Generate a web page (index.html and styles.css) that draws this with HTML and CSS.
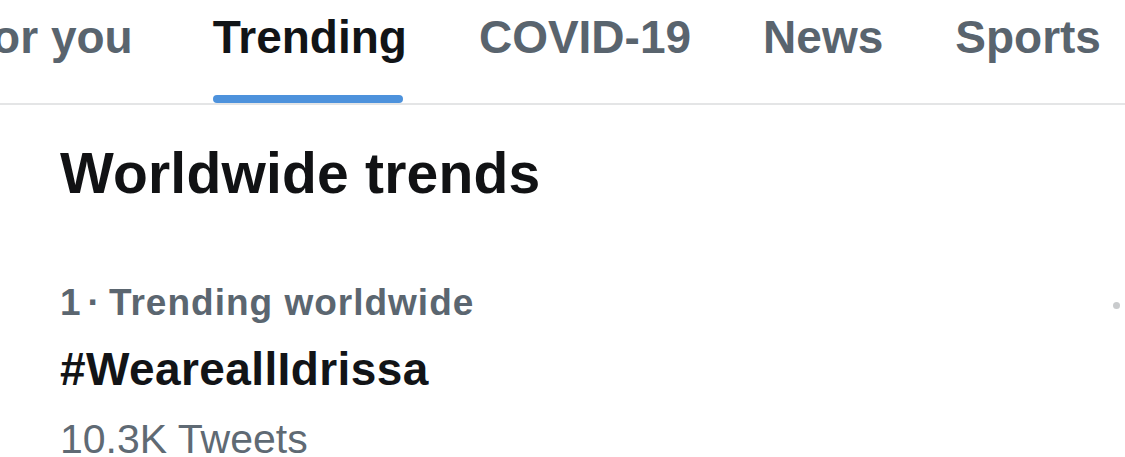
FILE: index.html
```html
<!DOCTYPE html>
<html lang="en">
<head>
<meta charset="utf-8">
<title>Explore - Trending</title>
<link rel="stylesheet" href="styles.css">
</head>
<body>
  <nav class="tabs">
    <div class="tab tab-first"><span class="tab-label">For you</span></div>
    <div class="tab tab-active"><span class="tab-label">Trending</span><span class="tab-indicator"></span></div>
    <div class="tab"><span class="tab-label">COVID-19</span></div>
    <div class="tab"><span class="tab-label">News</span></div>
    <div class="tab"><span class="tab-label">Sports</span></div>
  </nav>
  <main class="content">
    <h1 class="section-title">Worldwide trends</h1>
    <div class="trend">
      <div class="trend-info">
        <div class="trend-meta"><span class="trend-rank">1</span><span class="trend-sep">·</span>Trending worldwide</div>
        <div class="trend-name">#WeareallIdrissa</div>
        <div class="trend-count">10.3K Tweets</div>
      </div>
      <span class="trend-more"></span>
    </div>
  </main>
</body>
</html>
```

FILE: styles.css
```css
html, body {
  margin: 0;
  padding: 0;
  background: #ffffff;
  overflow: hidden;
}

body {
  width: 1125px;
  height: 457px;
  font-family: "Liberation Sans", Arial, sans-serif;
  color: #0f1419;
}

.tabs {
  display: flex;
  gap: 72px;
  margin-left: -36px;
  border-bottom: 2px solid #e4e5e6;
  white-space: nowrap;
}

.tab {
  display: flex;
  flex-direction: column;
  padding-top: 7px;
  font-size: 46px;
  font-weight: 700;
  color: #59646e;
}

.tab-first {
  margin-right: 8px;
}

.tab-label {
  display: block;
  line-height: 60px;
  height: 60px;
  margin-bottom: 36px;
}

.tab-active {
  color: #111417;
}

.tab-active .tab-label {
  margin-bottom: 28px;
}

.tab-indicator {
  display: block;
  height: 8px;
  border-radius: 4px;
  background: #4d92dc;
  margin-right: 4px;
}

.content {
  padding-left: 60px;
}

.section-title {
  margin: 34px 0 0 0;
  font-size: 57px;
  line-height: 68px;
  font-weight: 700;
  color: #111214;
  letter-spacing: 0.2px;
}

.trend {
  display: flex;
  justify-content: space-between;
  margin-top: 73px;
  padding-right: 5px;
}

.trend-meta {
  font-size: 37px;
  line-height: 46px;
  font-weight: 700;
  color: #5b6670;
  letter-spacing: 1px;
}

.trend-sep {
  margin: 0 8px 0 6px;
}

.trend-name {
  margin-top: 13px;
  font-size: 46px;
  line-height: 60px;
  font-weight: 700;
  color: #121417;
  letter-spacing: 0.4px;
}

.trend-count {
  margin-top: 14px;
  font-size: 41px;
  line-height: 52px;
  font-weight: 400;
  color: #5f6a74;
}

.trend-more {
  align-self: flex-start;
  margin-top: 22px;
  width: 7px;
  height: 7px;
  border-radius: 50%;
  background: #c9cbcd;
}
```
